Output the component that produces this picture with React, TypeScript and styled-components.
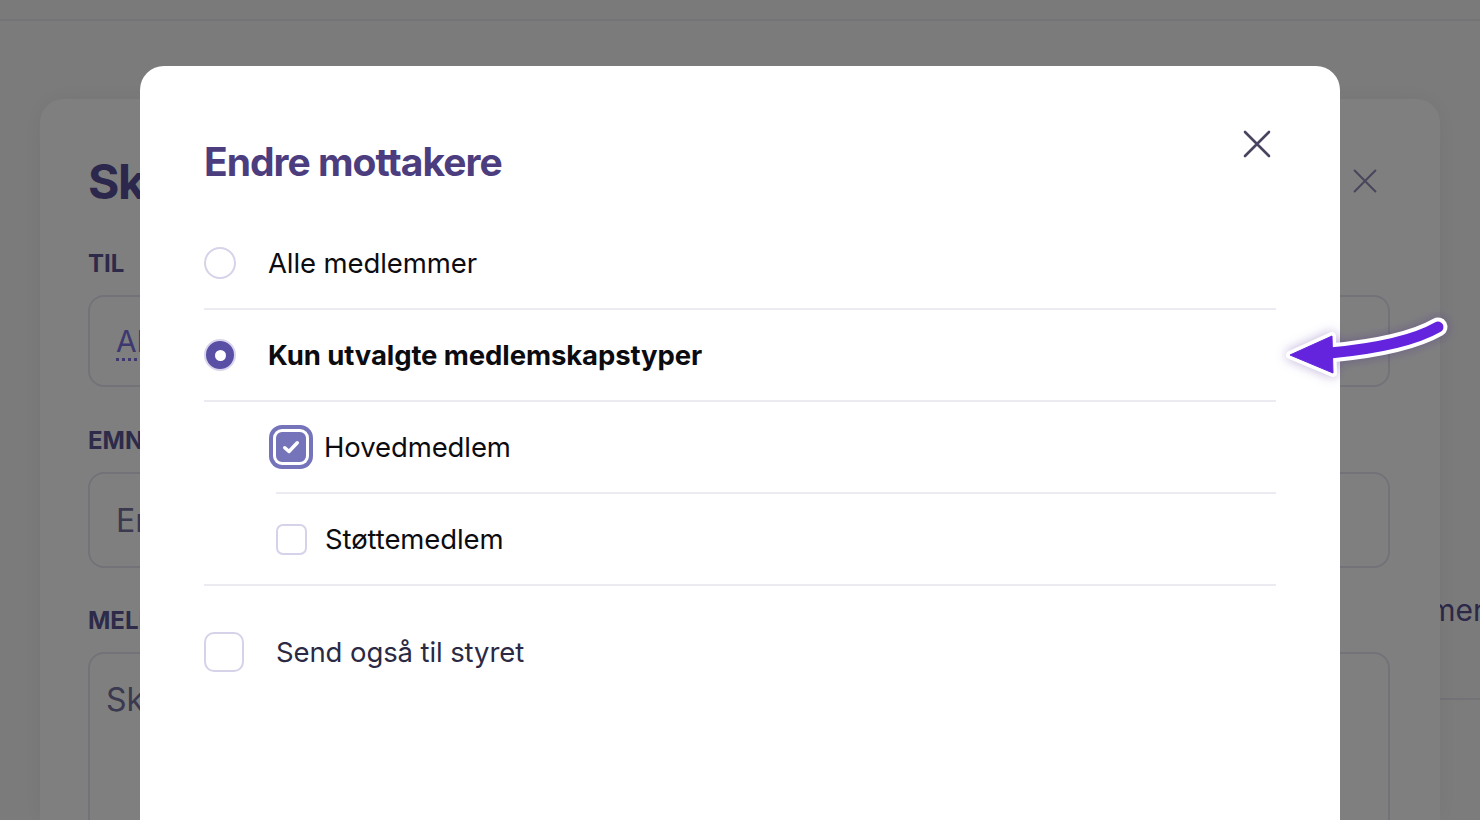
import React from "react";
import styled, { createGlobalStyle } from "styled-components";

const Global = createGlobalStyle`
  html, body { margin: 0; padding: 0; }
  body {
    width: 1480px; height: 820px; overflow: hidden;
    background: #f7f7f8;
    font-family: Inter, "Noto Sans", "Liberation Sans", sans-serif;
    -webkit-font-smoothing: antialiased;
  }
  * { box-sizing: border-box; }
`;

/* ---------- background page ---------- */
const Page = styled.div`
  width: 1480px;
  height: 820px;
  display: flex;
  flex-direction: column;
`;
const TopBar = styled.div`
  height: 21px;
  background: #f4f4f5;
  border-bottom: 2px solid #e8e8ec;
`;
const PageBody = styled.div`
  flex: 1;
  display: flex;
  padding: 78px 0 0 40px;
  overflow: hidden;
`;
const Card = styled.div`
  width: 1400px;
  flex-shrink: 0;
  background: #ffffff;
  border-radius: 24px 24px 0 0;
  box-shadow: 0 0 24px rgba(0, 0, 0, 0.06);
  padding: 52px 50px 0 48px;
  position: relative;
  z-index: 1;
`;
const CardHead = styled.div`
  display: flex;
  justify-content: space-between;
  align-items: center;
  height: 60px;
`;
const CardTitle = styled.h1`
  margin: 0;
  font-size: 48px;
  font-weight: 700;
  letter-spacing: -1.5px;
  color: #584f98;
`;
const CardClose = styled.div`
  width: 26px;
  height: 26px;
  color: #918db8;
  margin-right: 12px;
  display: flex;
`;
const FieldLabel = styled.div<{ $top: number }>`
  font-size: 24px;
  font-weight: 700;
  color: #5a5494;
  text-transform: uppercase;
  margin: ${(p) => p.$top}px 0 16px;
  height: 30px;
  line-height: 30px;
`;
const Field = styled.div<{ $h: number }>`
  height: ${(p) => p.$h}px;
  border: 2px solid #e4e4f0;
  border-radius: 16px;
  display: flex;
  align-items: ${(p) => (p.$h > 100 ? "flex-start" : "center")};
  padding: ${(p) => (p.$h > 100 ? "26px 16px" : "0 26px")};
  font-size: 32px;
  color: #76729e;
`;
const LinkText = styled.span`
  color: #7a72e0;
  font-size: 30px;
  text-decoration: underline dotted;
  text-underline-offset: 6px;
`;
const SidePanel = styled.div`
  flex: 1;
  display: flex;
  flex-direction: column;
  overflow: hidden;
`;
const SideText = styled.div`
  margin-top: 493px;
  height: 40px;
  font-size: 30px;
  color: #585090;
  white-space: nowrap;
  margin-left: -124px;
`;
const SideRule = styled.div`
  margin-top: 66px;
  border-top: 2px solid #e6e6ee;
  flex: 1;
  background: #f9f9fb;
`;

/* ---------- overlay & modal ---------- */
const Overlay = styled.div`
  position: fixed;
  inset: 0;
  background: rgba(0, 0, 0, 0.5);
  display: flex;
  justify-content: center;
  padding-top: 66px;
  z-index: 10;
`;
const Modal = styled.div`
  width: 1200px;
  height: 820px;
  background: #ffffff;
  border-radius: 24px;
  padding: 74px 64px 0 64px;
  display: flex;
  flex-direction: column;
`;
const ModalHead = styled.div`
  display: flex;
  justify-content: space-between;
  align-items: flex-start;
  height: 44px;
`;
const ModalTitle = styled.h2`
  margin: 0;
  font-size: 39px;
  line-height: 44px;
  font-weight: 700;
  letter-spacing: -1px;
  color: #4c3d7f;
`;
const CloseBtn = styled.button`
  border: 0;
  background: none;
  padding: 0;
  width: 30px;
  height: 30px;
  margin: -11px 4px 0 0;
  color: #48435f;
  display: flex;
  cursor: pointer;
`;
const List = styled.div`
  margin-top: 34px;
  display: flex;
  flex-direction: column;
`;
const Row = styled.div<{ $indent?: number; $gap: number; $line?: boolean }>`
  height: ${(p) => (p.$line === false ? 90 : 92)}px;
  display: flex;
  align-items: center;
  gap: ${(p) => p.$gap}px;
  margin-left: ${(p) => p.$indent ?? 0}px;
  border-bottom: ${(p) => (p.$line === false ? "0" : "2px solid #ecebf2")};
`;
const Divider = styled.div`
  border-top: 2px solid #ecebf2;
`;
const Radio = styled.span<{ $on?: boolean }>`
  width: 32px;
  height: 32px;
  border-radius: 50%;
  flex-shrink: 0;
  border: 2px solid ${(p) => (p.$on ? "#d9d5ec" : "#d6d2e9")};
  background: ${(p) => (p.$on ? "#5950a6" : "#fff")};
  display: flex;
  align-items: center;
  justify-content: center;
  &::after {
    content: "";
    width: 11px;
    height: 11px;
    border-radius: 50%;
    background: #fff;
    display: ${(p) => (p.$on ? "block" : "none")};
  }
`;
const Check = styled.span<{ $on?: boolean; $size: number; $radius: number }>`
  width: ${(p) => p.$size}px;
  height: ${(p) => p.$size}px;
  border-radius: ${(p) => p.$radius}px;
  flex-shrink: 0;
  border: 2px solid ${(p) => (p.$on ? "#7573b9" : "#d6d2e9")};
  background: ${(p) => (p.$on ? "#7573b9" : "#fff")};
  box-shadow: ${(p) => (p.$on ? "0 0 0 3px #fff, 0 0 0 7px #7573b9" : "none")};
  display: flex;
  align-items: center;
  justify-content: center;
  color: #fff;
`;
const Label = styled.span<{ $bold?: boolean; $color?: string }>`
  font-size: 27.5px;
  font-weight: ${(p) => (p.$bold ? 700 : 400)};
  color: ${(p) => p.$color ?? "#0c0c10"};
  letter-spacing: -0.1px;
`;
const BoardRow = styled.div`
  margin-top: 46px;
  display: flex;
  align-items: center;
  gap: 32px;
`;
const ArrowSvg = styled.svg`
  position: absolute;
  left: 1280px;
  top: 308px;
  overflow: visible;
  filter: drop-shadow(0 0 6px rgba(70, 30, 150, 0.35));
`;

const XIcon = ({ w = 2.6 }: { w?: number }) => (
  <svg width="100%" height="100%" viewBox="0 0 30 30" fill="none">
    <path d="M3 3 L27 27 M27 3 L3 27" stroke="currentColor" strokeWidth={w} strokeLinecap="round" />
  </svg>
);

const CheckMark = () => (
  <svg width="20" height="20" viewBox="0 0 16 16" fill="none">
    <path d="M3 8.6 L6.4 11.6 L13 4.6" stroke="currentColor" strokeWidth="2.8" strokeLinecap="round" strokeLinejoin="round" />
  </svg>
);

const Arrow = () => {
  const shaft = "M158 19 Q 125 38 50 45";
  const head = "M10 47 L52 28 L53 65 Z";
  return (
    <ArrowSvg width="180" height="80" viewBox="0 0 180 80">
      <path d={shaft} stroke="#ffffff" strokeWidth="19" strokeLinecap="round" fill="none" />
      <path d={head} fill="#ffffff" stroke="#ffffff" strokeWidth="8" strokeLinejoin="round" />
      <path d={shaft} stroke="#6424de" strokeWidth="11" strokeLinecap="round" fill="none" />
      <path d={head} fill="#6424de" stroke="#6424de" strokeWidth="1" strokeLinejoin="round" />
    </ArrowSvg>
  );
};

export default function App() {
  return (
    <>
      <Global />
      <Page>
        <TopBar />
        <PageBody>
          <Card>
            <CardHead>
              <CardTitle>Skriv melding</CardTitle>
              <CardClose>
                <XIcon w={2.4} />
              </CardClose>
            </CardHead>
            <FieldLabel $top={38}>Til</FieldLabel>
            <Field $h={92}>
              <LinkText>Alle medlemmer</LinkText>
            </Field>
            <FieldLabel $top={39}>Emne</FieldLabel>
            <Field $h={96}>Emne</Field>
            <FieldLabel $top={38}>Melding</FieldLabel>
            <Field $h={200}>Skriv meldingen her</Field>
          </Card>
          <SidePanel>
            <SideText>medlemmer</SideText>
            <SideRule />
          </SidePanel>
        </PageBody>
      </Page>
      <Overlay>
        <Modal>
          <ModalHead>
            <ModalTitle>Endre mottakere</ModalTitle>
            <CloseBtn aria-label="Lukk">
              <XIcon />
            </CloseBtn>
          </ModalHead>
          <List>
            <Row $gap={32}>
              <Radio />
              <Label>Alle medlemmer</Label>
            </Row>
            <Row $gap={32}>
              <Radio $on />
              <Label $bold>Kun utvalgte medlemskapstyper</Label>
            </Row>
            <Row $gap={18} $indent={72}>
              <Check $on $size={30} $radius={6}>
                <CheckMark />
              </Check>
              <Label>Hovedmedlem</Label>
            </Row>
            <Row $gap={18} $indent={72} $line={false}>
              <Check $size={31} $radius={7} />
              <Label>Støttemedlem</Label>
            </Row>
            <Divider />
          </List>
          <BoardRow>
            <Check $size={40} $radius={10} />
            <Label $color="#2b2944">Send også til styret</Label>
          </BoardRow>
        </Modal>
        <Arrow />
      </Overlay>
    </>
  );
}
